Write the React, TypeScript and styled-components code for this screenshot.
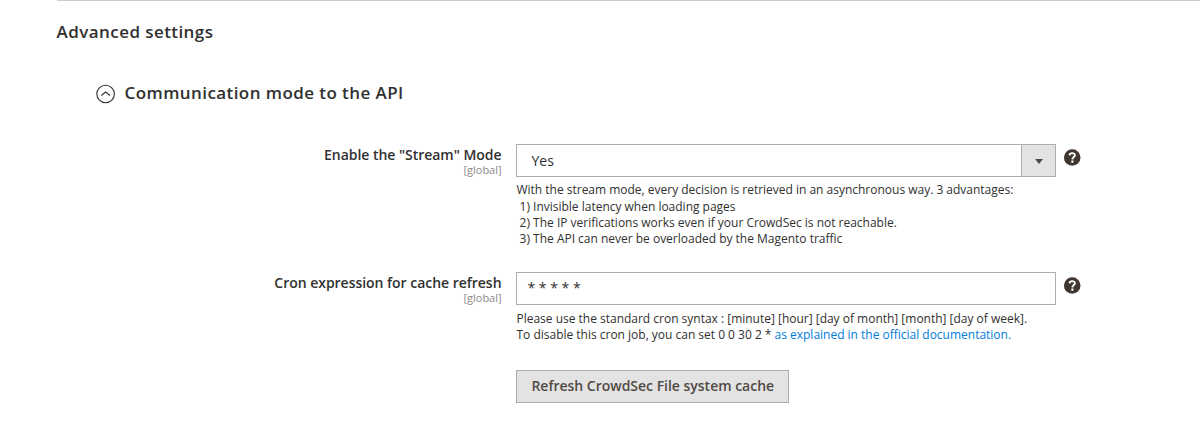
import React from 'react';
import styled, { createGlobalStyle } from 'styled-components';

const GlobalStyle = createGlobalStyle`
  * { box-sizing: border-box; }
  body { margin: 0; background: #fff; color: #303030; font-family: "Open Sans", "Noto Sans", sans-serif; font-size: 14px; }
`;

const Page = styled.main`
  height: 429px;
  overflow: hidden;
  padding-left: 57px;
`;
const Section = styled.section`
  border-top: 1px solid #cccccc;
`;
const SectionTitle = styled.h2`
  margin: 0 0 0 -0.4px;
  padding-top: 19px;
  font-size: 17px;
  line-height: 24px;
  font-weight: 600;
  letter-spacing: 0.025em;
`;
const GroupHeader = styled.div`
  display: flex;
  align-items: center;
  gap: 9.5px;
  margin: 37px 0 0 38px;
  height: 24px;
`;
const Chevron = styled.svg`
  flex: none;
  margin-top: 2px;
`;
const GroupTitle = styled.h3`
  margin: 0;
  font-size: 17px;
  line-height: 24px;
  font-weight: 600;
  letter-spacing: 0.025em;
`;
const Row = styled.div<{ $top: number }>`
  display: grid;
  grid-template-columns: 444.5px 540px 18px;
  column-gap: 14.5px;
  margin-top: ${p => p.$top}px;
  align-items: start;
`;
const Label = styled.label`
  padding-top: 2px;
  text-align: right;
  font-size: 14px;
  line-height: 18px;
  font-weight: 600;
  letter-spacing: -0.028px;
`;
const Scope = styled.span`
  display: block;
  margin-top: -1px;
  font-size: 11px;
  line-height: 13px;
  font-weight: 400;
  color: #8c8c8c;
`;
const Select = styled.div`
  display: flex;
  height: 33px;
  border: 1px solid #adadad;
  line-height: 31px;
  padding-left: 14.5px;
  justify-content: space-between;
`;
const Arrow = styled.span`
  width: 34px;
  border-left: 1px solid #adadad;
  background: #e3e3e3;
  display: flex;
  align-items: center;
  justify-content: center;
  padding-top: 1px;
`;
const Field = styled.div`
  height: 33px;
  border: 1px solid #adadad;
  padding-left: 10.5px;
  line-height: 29px;
`;
const Note = styled.div<{ $top: number }>`
  height: 65px;
  padding: ${p => p.$top}px 0 0 0.5px;
  font-size: 12px;
  line-height: 16.32px;
  letter-spacing: -0.01px;
`;
const Line = styled.div`
  white-space: pre;
`;
const Link = styled.a`
  color: #007bdb;
  text-decoration: none;
`;
const Button = styled.button`
  display: block;
  margin: 0 0 0 459px;
  width: 273px;
  height: 33px;
  padding: 0 0 2px 0.5px;
  border: 1px solid #adadad;
  background: #e3e3e3;
  color: #514943;
  font: 600 14px/29px "Open Sans", sans-serif;
  letter-spacing: -0.015px;
`;
const HelpIcon = styled.svg`
  display: block;
  margin: 5px 0 0 -8px;
`;

const Help = () => (
  <HelpIcon width="18" height="17" viewBox="0 0 18 17">
    <circle cx="9.2" cy="8.5" r="8.3" fill="#41362f" />
    <path d="M6.6 6.4C6.7 3.3 12 3.4 11.9 6.3C11.9 8.1 9.4 8.1 9.4 10.4" fill="none" stroke="#fff" strokeWidth="1.9" />
    <rect x="8.3" y="11.5" width="2.2" height="2.2" fill="#fff" />
  </HelpIcon>
);

export default function App() {
  return (
    <Page>
      <GlobalStyle />
      <Section>
        <SectionTitle>Advanced settings</SectionTitle>
        <GroupHeader>
          <Chevron width="20" height="20" viewBox="0 0 20 20" fill="none" stroke="#303030" strokeWidth="1.1">
            <circle cx="10.6" cy="10" r="8.8" />
            <path d="M6.3 11.5L10.6 8L14.9 11.5" />
          </Chevron>
          <GroupTitle>Communication mode to the API</GroupTitle>
        </GroupHeader>
        <Row $top={39}>
          <Label>Enable the "Stream" Mode<Scope>[global]</Scope></Label>
          <div>
            <Select>Yes<Arrow><svg width="8" height="5" viewBox="0 0 8 5"><path d="M0 0H8L4 5Z" fill="#514943" /></svg></Arrow></Select>
            <Note $top={5.2}>
              <Line>With the stream mode, every decision is retrieved in an asynchronous way. 3 advantages:</Line>
              <Line>{' 1) Invisible latency when loading pages'}</Line>
              <Line>{' 2) The IP verifications works even if your CrowdSec is not reachable.'}</Line>
              <Line>{' 3) The API can never be overloaded by the Magento traffic'}</Line>
            </Note>
          </div>
          <Help />
        </Row>
        <Row $top={30}>
          <Label>Cron expression for cache refresh<Scope>[global]</Scope></Label>
          <div>
            <Field>* * * * *</Field>
            <Note $top={6}>
              <Line>Please use the standard cron syntax : [minute] [hour] [day of month] [month] [day of week].</Line>
              <Line>To disable this cron job, you can set 0 0 30 2 * <Link>as explained in the official documentation.</Link></Line>
            </Note>
          </div>
          <Help />
        </Row>
        <Button>Refresh CrowdSec File system cache</Button>
      </Section>
    </Page>
  );
}
